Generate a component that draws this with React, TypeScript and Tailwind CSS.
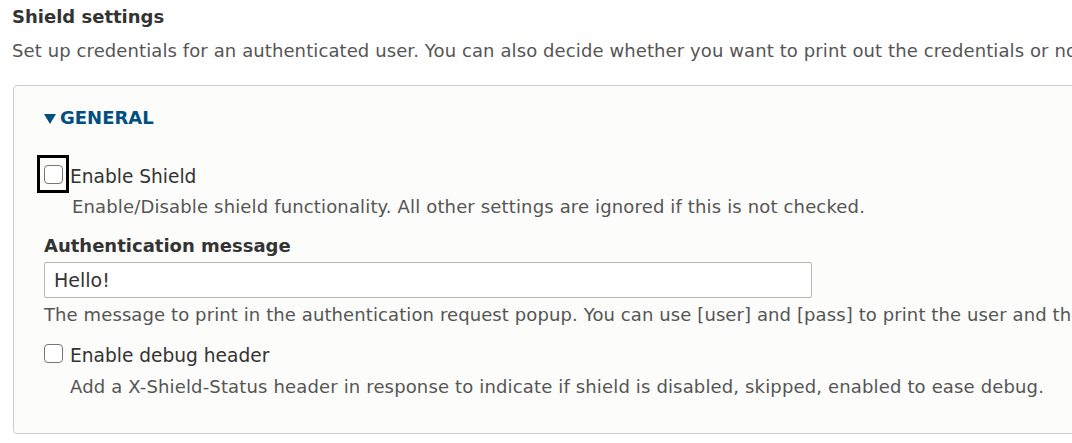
import React from "react";

export default function App() {
  return (
    <div className="w-[1072px] h-[443px] overflow-hidden bg-white font-['DejaVu_Sans',sans-serif] text-[#333]">
      <div className="pl-3 pt-[5px]">
        <h2 className="text-[18px] font-bold leading-[24px] text-[#333]">Shield settings</h2>
        <p className="mt-[10px] whitespace-nowrap text-[18px] leading-[24px] tracking-[0.1px] text-[#555]">
          Set up credentials for an authenticated user. You can also decide whether you want to print out the credentials or not.
        </p>
        <div className="mt-[22px] ml-px h-[349px] w-[1100px] rounded border border-[#ccc] bg-[#fcfcfa] pl-[30px] pt-[20px]">
          <div className="flex items-center gap-[4px] text-[18px] font-bold leading-[24px] text-[#004f80]">
            <svg width="12" height="10" viewBox="0 0 12 10" className="mt-[1px]">
              <polygon points="0,0 12,0 6,10" fill="#004f80" />
            </svg>
            <span>GENERAL</span>
          </div>
          <div className="mt-[25px] flex items-start">
            <div className="-ml-[7px] flex h-[38px] w-[32px] items-center justify-center border-[3px] border-black">
              <span className="block h-[19px] w-[19px] rounded-[4px] border border-[#777] bg-white" />
            </div>
            <span className="ml-[1px] mt-[10px] whitespace-nowrap text-[18.6px] leading-[24px] text-[#333]">Enable Shield</span>
          </div>
          <p className="ml-[28px] mt-[2px] whitespace-nowrap text-[18px] leading-[24px] tracking-[0.15px] text-[#555]">
            Enable/Disable shield functionality. All other settings are ignored if this is not checked.
          </p>
          <div className="mt-[15px] text-[18px] font-bold leading-[24px] text-[#333]">Authentication message</div>
          <div className="mt-[4px] flex h-[36px] w-[768px] items-center rounded-[2px] border border-[#b8b8b8] bg-white pl-[9px] text-[19px] text-[#333]">
            Hello!
          </div>
          <p className="mt-[5px] whitespace-nowrap text-[18px] leading-[24px] tracking-[0.1px] text-[#555]">
            The message to print in the authentication request popup. You can use [user] and [pass] to print the user and the password.
          </p>
          <div className="mt-[17px] flex items-start">
            <span className="block h-[19px] w-[19px] rounded-[4px] border border-[#777] bg-white" />
            <span className="ml-[7px] whitespace-nowrap text-[18.6px] leading-[24px] text-[#333]">Enable debug header</span>
          </div>
          <p className="ml-[26px] mt-[7px] whitespace-nowrap text-[18px] leading-[24px] tracking-[0.15px] text-[#555]">
            Add a X-Shield-Status header in response to indicate if shield is disabled, skipped, enabled to ease debug.
          </p>
        </div>
      </div>
    </div>
  );
}
